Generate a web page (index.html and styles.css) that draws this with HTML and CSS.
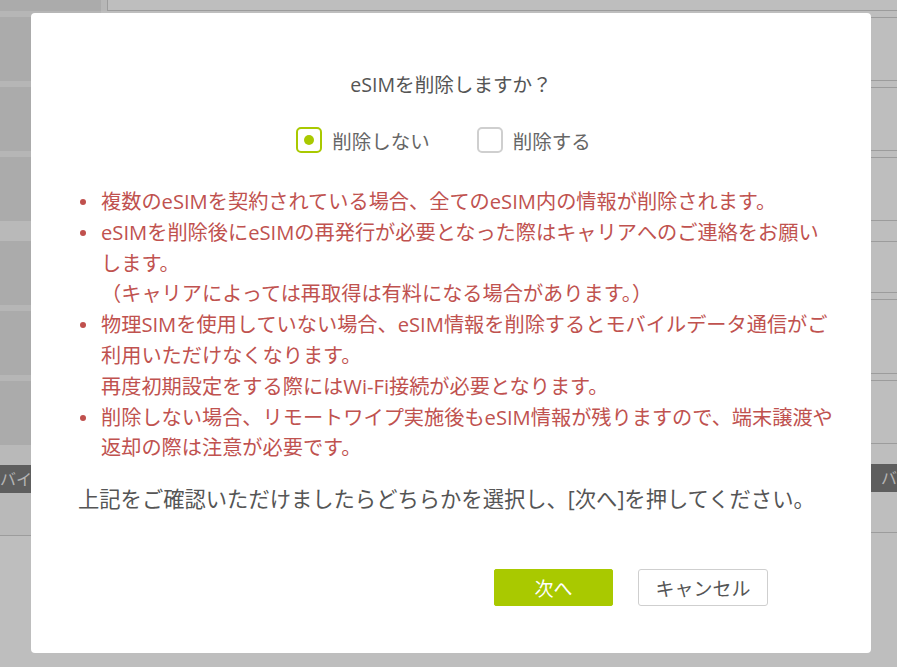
FILE: index.html
```html
<!DOCTYPE html>
<html lang="ja">

<head>
    <meta charset="UTF-8">
    <meta name="viewport" content="width=device-width, initial-scale=1.0">
    <title>eSIM削除</title>
    <link rel="stylesheet" href="styles.css">
</head>

<body>
    <div class="page">
        <div class="side">
            <div class="cell top"></div>
            <div class="sep"></div>
            <div class="cell"></div>
            <div class="sep"></div>
            <div class="cell"></div>
            <div class="sep"></div>
            <div class="cell"></div>
            <div class="band"></div>
            <div class="cell"></div>
            <div class="sep"></div>
            <div class="cell"></div>
            <div class="sep"></div>
            <div class="cell"></div>
            <div class="band"></div>
            <div class="bar side-bar">バイス</div>
            <div class="foot"></div>
        </div>
        <div class="divider"></div>
        <div class="main">
            <div class="head"></div>
            <div class="line h7"></div>
            <div class="line h62"></div>
            <div class="line h7"></div>
            <div class="line h62"></div>
            <div class="line h7"></div>
            <div class="line h62"></div>
            <div class="line h20"></div>
            <div class="line h51"></div>
            <div class="line h7"></div>
            <div class="line h73"></div>
            <div class="line h7"></div>
            <div class="line h62"></div>
            <div class="blank"></div>
            <div class="bar main-bar">バイス</div>
            <div class="line h40"></div>
        </div>
    </div>

    <div class="modal">
        <p class="title">eSIMを削除しますか？</p>
        <div class="choices">
            <label class="choice"><span class="box checked"></span>削除しない</label>
            <label class="choice"><span class="box"></span>削除する</label>
        </div>
        <ul class="notes">
            <li>複数のeSIMを契約されている場合、全てのeSIM内の情報が削除されます。</li>
            <li>eSIMを削除後にeSIMの再発行が必要となった際はキャリアへのご連絡をお願い<br>します。<br>（キャリアによっては再取得は有料になる場合があります。）</li>
            <li>物理SIMを使用していない場合、eSIM情報を削除するとモバイルデータ通信がご<br>利用いただけなくなります。<br>再度初期設定をする際にはWi-Fi接続が必要となります。</li>
            <li>削除しない場合、リモートワイプ実施後もeSIM情報が残りますので、端末譲渡や<br>返却の際は注意が必要です。</li>
        </ul>
        <p class="confirm">上記をご確認いただけましたらどちらかを選択し、[次へ]を押してください。</p>
        <div class="actions">
            <button class="btn primary">次へ</button>
            <button class="btn">キャンセル</button>
        </div>
    </div>
</body>

</html>
```

FILE: styles.css
```css
body {
    margin: 0;
    background-color: #bebebe;
    font-family: "Open Sans", "Noto Sans CJK JP", sans-serif;
    overflow: hidden;
}

/* background page (under the overlay) */
.page {
    display: flex;
    height: 667px;
}

.side {
    width: 101px;
    flex-shrink: 0;
    display: flex;
    flex-direction: column;
}

.side .cell {
    height: 64px;
    background-color: #ababab;
}

.side .cell.top {
    height: 11px;
}

.side .sep {
    height: 6px;
    background-color: #b6b6b6;
}

.side .band {
    height: 20px;
    background-color: #b9b9b9;
}

.side .foot {
    height: 42px;
    background-color: #b9b9b9;
    border-bottom: 1px solid #9c9c9c;
}

.divider {
    width: 6px;
    flex-shrink: 0;
    background-color: #b7b7b7;
    border-right: 1px solid #9c9c9c;
    height: 11px;
}

.main {
    flex: 1;
    min-width: 0;
    display: flex;
    flex-direction: column;
}

.main .head {
    height: 10px;
    border-bottom: 1px solid #9c9c9c;
}

.main .line {
    border-bottom: 1px solid #9c9c9c;
}

.h7 { height: 6px; }
.h20 { height: 20px; }
.h40 { height: 40px; }
.h51 { height: 50px; }
.h62 { height: 62px; }
.h73 { height: 73px; }

.main .blank {
    height: 20px;
}

.bar {
    height: 28px;
    line-height: 28px;
    background-color: #5e5e5e;
    color: #b4b4b4;
    font-size: 16px;
    white-space: nowrap;
    overflow: hidden;
}

.main-bar {
    padding-left: 773px;
}

/* modal */
.modal {
    position: absolute;
    left: 31px;
    top: 13px;
    width: 840px;
    height: 640px;
    box-sizing: border-box;
    padding: 57px 47px 0;
    background-color: #fff;
    border-radius: 4px;
}

.title {
    margin: 0;
    text-align: center;
    font-size: 19.6px;
    line-height: 30px;
    color: #555;
}

.choices {
    display: flex;
    justify-content: center;
    gap: 47px;
    margin: 27px 0 0;
    padding-right: 15px;
}

.choice {
    display: flex;
    align-items: center;
    gap: 10px;
    height: 26px;
    font-size: 19.5px;
    color: #666;
}

.box {
    width: 26px;
    height: 26px;
    box-sizing: border-box;
    border: 2px solid #cfcfcf;
    border-radius: 5px;
    display: flex;
    align-items: center;
    justify-content: center;
}

.box.checked {
    border-color: #a9c900;
}

.box.checked::after {
    content: "";
    width: 10px;
    height: 10px;
    border-radius: 50%;
    background-color: #a9c900;
}

.notes {
    margin: 33px 0 0;
    padding-left: 23px;
    list-style: none;
    font-size: 20.2px;
    line-height: 30.8px;
    color: #c0524f;
    white-space: nowrap;
}

.notes li {
    position: relative;
}

.notes li::before {
    content: "";
    position: absolute;
    left: -21px;
    top: 13px;
    width: 6px;
    height: 6px;
    border-radius: 50%;
    background-color: #c0504d;
}

.confirm {
    margin: 21px 0 0;
    font-size: 21.3px;
    line-height: 30px;
    color: #555;
    white-space: nowrap;
}

.actions {
    display: flex;
    justify-content: flex-end;
    gap: 25px;
    margin-top: 55px;
    padding-right: 56px;
}

.btn {
    width: 130px;
    height: 37px;
    padding: 0;
    border: 1px solid #cfcfcf;
    border-radius: 3px;
    background-color: #fff;
    color: #555;
    font-family: inherit;
    font-size: 19px;
    cursor: pointer;
}

.btn.primary {
    width: 119px;
    border-color: #a9c900;
    background-color: #a9c900;
    color: #fff;
    border-radius: 2px;
}
```
